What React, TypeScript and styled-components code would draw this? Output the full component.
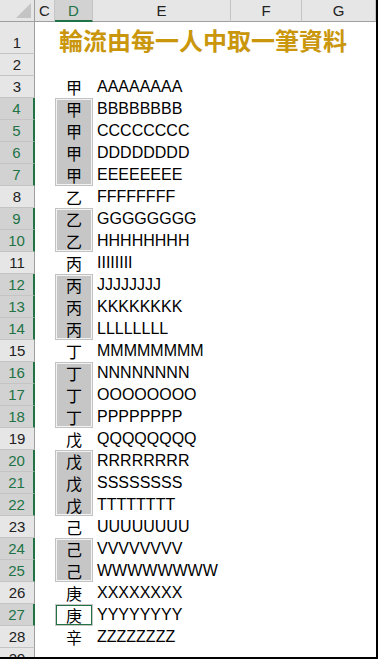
import React from 'react';
import styled, { createGlobalStyle } from 'styled-components';

type Entry = { row: number; key: string; value: string };

const entries: Entry[] = [
  { row: 3, key: '甲', value: 'AAAAAAAA' },
  { row: 4, key: '甲', value: 'BBBBBBBB' },
  { row: 5, key: '甲', value: 'CCCCCCCC' },
  { row: 6, key: '甲', value: 'DDDDDDDD' },
  { row: 7, key: '甲', value: 'EEEEEEEE' },
  { row: 8, key: '乙', value: 'FFFFFFFF' },
  { row: 9, key: '乙', value: 'GGGGGGGG' },
  { row: 10, key: '乙', value: 'HHHHHHHH' },
  { row: 11, key: '丙', value: 'IIIIIIII' },
  { row: 12, key: '丙', value: 'JJJJJJJJ' },
  { row: 13, key: '丙', value: 'KKKKKKKK' },
  { row: 14, key: '丙', value: 'LLLLLLLL' },
  { row: 15, key: '丁', value: 'MMMMMMMM' },
  { row: 16, key: '丁', value: 'NNNNNNNN' },
  { row: 17, key: '丁', value: 'OOOOOOOO' },
  { row: 18, key: '丁', value: 'PPPPPPPP' },
  { row: 19, key: '戊', value: 'QQQQQQQQ' },
  { row: 20, key: '戊', value: 'RRRRRRRR' },
  { row: 21, key: '戊', value: 'SSSSSSSS' },
  { row: 22, key: '戊', value: 'TTTTTTTT' },
  { row: 23, key: '己', value: 'UUUUUUUU' },
  { row: 24, key: '己', value: 'VVVVVVVV' },
  { row: 25, key: '己', value: 'WWWWWWWW' },
  { row: 26, key: '庚', value: 'XXXXXXXX' },
  { row: 27, key: '庚', value: 'YYYYYYYY' },
  { row: 28, key: '辛', value: 'ZZZZZZZZ' },
];

const ranges: [number, number][] = [
  [4, 7],
  [9, 10],
  [12, 14],
  [16, 18],
  [20, 22],
  [24, 25],
];
const activeRow = 27;

const columns = ['C', 'D', 'E', 'F', 'G'];
const rowNumbers = Array.from({ length: 29 }, (_, i) => i + 1);

const isSelected = (row: number): boolean =>
  row === activeRow || ranges.some(([a, b]) => row >= a && row <= b);

const App: React.FC = () => (
  <>
    <GlobalStyle />
    <Sheet>
      <Corner>
        <svg width="15" height="15" viewBox="0 0 15 15">
          <polygon points="15,0 15,15 0,15" fill="#c4c4c4" />
        </svg>
      </Corner>
      {columns.map((col, i) => (
        <ColHeader key={col} $col={i + 2} $selected={col === 'D'}>{col}</ColHeader>
      ))}
      {rowNumbers.map((row) => (
        <RowHeader key={row} $row={row + 1} $selected={isSelected(row)}>{row}</RowHeader>
      ))}

      {ranges.map(([a, b]) => (
        <Selection key={a} $from={a + 1} $to={b + 2} />
      ))}
      <ActiveCell $row={activeRow + 1} />

      <Title>輪流由每一人中取一筆資料</Title>
      {entries.map((e) => (
        <React.Fragment key={e.row}>
          <KeyCell $row={e.row + 1}>{e.key}</KeyCell>
          <ValueCell $row={e.row + 1}>{e.value}</ValueCell>
        </React.Fragment>
      ))}
    </Sheet>
  </>
);

const GlobalStyle = createGlobalStyle`
  html, body {
    margin: 0;
    padding: 0;
    background: #ffffff;
  }
  body {
    font-family: "Liberation Sans", Arial, sans-serif;
  }
`;

const Sheet = styled.div`
  display: grid;
  grid-template-columns: 35px 20px 38px 138px 71px 74px;
  grid-template-rows: 22px 32px repeat(28, 22px);
  width: 378px;
  height: 659px;
  box-sizing: border-box;
  border-right: 2px solid #000;
  border-bottom: 2px solid #000;
  overflow: hidden;
  background: #fff;
`;

const Corner = styled.div`
  grid-row: 1;
  grid-column: 1;
  display: flex;
  align-items: flex-end;
  justify-content: flex-end;
  padding: 0 3px 3px 0;
  background: #e6e6e6;
  border-right: 1px solid #9f9f9f;
  border-bottom: 1px solid #9f9f9f;
  box-sizing: border-box;
`;

const ColHeader = styled.div<{ $col: number; $selected: boolean }>`
  grid-row: 1;
  grid-column: ${(p) => p.$col};
  display: flex;
  align-items: center;
  justify-content: center;
  box-sizing: border-box;
  background: ${(p) => (p.$selected ? '#d2d2d2' : '#e6e6e6')};
  border-right: 1px solid #c4c4c4;
  border-bottom: ${(p) => (p.$selected ? '2px solid #217346' : '1px solid #9f9f9f')};
  color: ${(p) => (p.$selected ? '#217346' : '#222')};
  font-size: 15px;
  padding-top: ${(p) => (p.$selected ? '1px' : '0')};
`;

const RowHeader = styled.div<{ $row: number; $selected: boolean }>`
  grid-row: ${(p) => p.$row};
  grid-column: 1;
  display: flex;
  align-items: flex-end;
  justify-content: center;
  box-sizing: border-box;
  padding-bottom: 1px;
  background: ${(p) => (p.$selected ? '#d2d2d2' : '#e6e6e6')};
  border-bottom: 1px solid #c4c4c4;
  border-right: ${(p) => (p.$selected ? '2px solid #217346' : '1px solid #9f9f9f')};
  color: ${(p) => (p.$selected ? '#217346' : '#222')};
  font-size: 15px;
  line-height: 19px;
`;

const Selection = styled.div<{ $from: number; $to: number }>`
  grid-column: 3;
  grid-row: ${(p) => p.$from} / ${(p) => p.$to};
  box-sizing: border-box;
  background: #c6c6c6;
  border: 1px solid #c2c2c2;
  box-shadow: inset 0 0 0 1px #f2f2f2;
`;

const ActiveCell = styled.div<{ $row: number }>`
  grid-column: 3;
  grid-row: ${(p) => p.$row};
  box-sizing: border-box;
  background: #fff;
  border: 1px solid #c6c6c6;
  box-shadow: inset 0 0 0 1px #217346;
`;

const Title = styled.div`
  grid-row: 2;
  grid-column: 3 / 7;
  display: flex;
  align-items: center;
  padding: 2px 0 0 4px;
  white-space: nowrap;
  font-family: "Noto Sans CJK TC", "Noto Sans CJK SC", sans-serif;
  font-size: 24px;
  font-weight: 700;
  color: #c9960c;
`;

const KeyCell = styled.div<{ $row: number }>`
  grid-row: ${(p) => p.$row};
  grid-column: 3;
  display: flex;
  align-items: center;
  justify-content: center;
  font-family: "Noto Sans CJK TC", "Noto Sans CJK SC", sans-serif;
  font-size: 16px;
  color: #000;
`;

const ValueCell = styled.div<{ $row: number }>`
  grid-row: ${(p) => p.$row};
  grid-column: 4 / 7;
  display: flex;
  align-items: center;
  padding-left: 4px;
  white-space: nowrap;
  font-size: 16px;
  color: #000;
`;

export default App;
